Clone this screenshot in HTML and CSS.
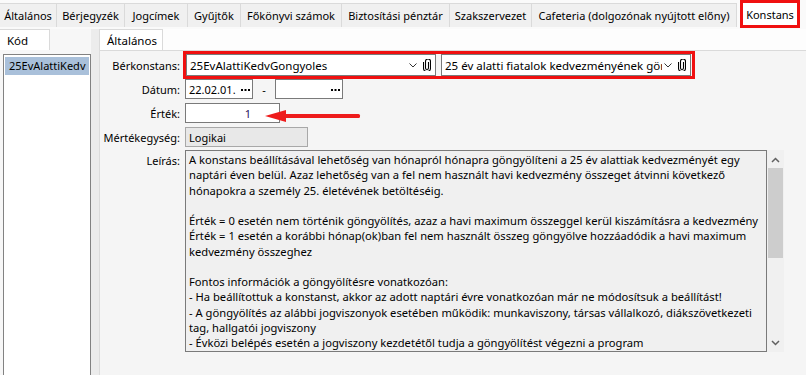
FILE: index.html
```html
<!DOCTYPE html>
<html lang="hu">
<head>
<meta charset="utf-8">
<title>Konstans</title>
<link rel="stylesheet" href="styles.css">
</head>
<body>
<div class="topbar">
  <div class="tab t1">Általános</div>
  <div class="tab t2">Bérjegyzék</div>
  <div class="tab t3">Jogcímek</div>
  <div class="tab t4">Gyűjtők</div>
  <div class="tab t5">Főkönyvi számok</div>
  <div class="tab t6">Biztosítási pénztár</div>
  <div class="tab t7">Szakszervezet</div>
  <div class="tab t8">Cafeteria (dolgozónak nyújtott előny)</div>
  <div class="tab active">Konstans</div>
</div>
<div class="main">
  <div class="left">
    <div class="subtabs"><div class="subtab kod">Kód</div></div>
    <div class="listwrap">
      <div class="list">
        <div class="item sel">25EvAlattiKedv</div>
      </div>
    </div>
  </div>
  <div class="splitter"></div>
  <div class="right">
    <div class="subtabs"><div class="subtab alt">Általános</div></div>
    <div class="page">
      <div class="row r-ber">
        <div class="lbl">Bérkonstans:</div>
        <div class="redbox">
          <div class="combo">
            <span class="ctext">25EvAlattiKedvGongyoles</span>
            <svg class="chev" width="8" height="5" viewBox="0 0 8 5"><path d="M0.5 0.5 L4 4 L7.5 0.5" fill="none" stroke="#333" stroke-width="1"/></svg>
            <svg class="clip" width="8" height="12" viewBox="0 0 8 12"><path d="M5.5 3 V9 A1.5 1.5 0 0 1 2.5 9 V2.5 A2.5 2.5 0 0 1 7.5 2.5 V9 A3.5 3.5 0 0 1 0.5 9 V3" fill="none" stroke="#000" stroke-width="1.1"/></svg>
          </div>
          <div class="combo">
            <span class="ctext">25 év alatti fiatalok kedvezményének göngyölítése</span>
            <svg class="chev" width="8" height="5" viewBox="0 0 8 5"><path d="M0.5 0.5 L4 4 L7.5 0.5" fill="none" stroke="#333" stroke-width="1"/></svg>
            <svg class="clip" width="8" height="12" viewBox="0 0 8 12"><path d="M5.5 3 V9 A1.5 1.5 0 0 1 2.5 9 V2.5 A2.5 2.5 0 0 1 7.5 2.5 V9 A3.5 3.5 0 0 1 0.5 9 V3" fill="none" stroke="#000" stroke-width="1.1"/></svg>
          </div>
        </div>
      </div>
      <div class="row r-dat">
        <div class="lbl">Dátum:</div>
        <div class="field date"><span>22.02.01.</span><svg class="dots" width="9" height="2" viewBox="0 0 9 2"><rect x="0" y="0" width="2" height="2" fill="#000"/><rect x="3.5" y="0" width="2" height="2" fill="#000"/><rect x="7" y="0" width="2" height="2" fill="#000"/></svg></div>
        <div class="dash">-</div>
        <div class="field date"><span></span><svg class="dots" width="9" height="2" viewBox="0 0 9 2"><rect x="0" y="0" width="2" height="2" fill="#000"/><rect x="3.5" y="0" width="2" height="2" fill="#000"/><rect x="7" y="0" width="2" height="2" fill="#000"/></svg></div>
      </div>
      <div class="row r-ert">
        <div class="lbl">Érték:</div>
        <div class="field ert">1</div>
        <svg class="arrow" width="100" height="16" viewBox="0 0 100 16"><polygon points="0,8 21,2 21,14" fill="#ee1c1c"/><rect x="19" y="6" width="76" height="4" rx="1.5" fill="#ee1c1c"/></svg>
      </div>
      <div class="row r-mert">
        <div class="lbl">Mértékegység:</div>
        <div class="field ro">Logikai</div>
      </div>
      <div class="row r-leir">
        <div class="lbl top">Leírás:</div>
        <div class="memo">
          <div class="memotext">A konstans beállításával lehetőség van hónapról hónapra göngyölíteni a 25 év alattiak kedvezményét egy<br>naptári éven belül. Azaz lehetőség van a fel nem használt havi kedvezmény összeget átvinni következő<br>hónapokra a személy 25. életévének betöltéséig.<br><br>Érték = 0 esetén nem történik göngyölítés, azaz a havi maximum összeggel kerül kiszámításra a kedvezmény<br>Érték = 1 esetén a korábbi hónap(ok)ban fel nem használt összeg göngyölve hozzáadódik a havi maximum<br>kedvezmény összeghez<br><br>Fontos információk a göngyölítésre vonatkozóan:<br>- Ha beállítottuk a konstanst, akkor az adott naptári évre vonatkozóan már ne módosítsuk a beállítást!<br>- A göngyölítés az alábbi jogviszonyok esetében működik: munkaviszony, társas vállalkozó, diákszövetkezeti<br>tag, hallgatói jogviszony<br>- Évközi belépés esetén a jogviszony kezdetétől tudja a göngyölítést végezni a program</div>
        </div>
        <div class="vscroll">
          <svg class="sarrow" width="9" height="6" viewBox="0 0 9 6"><path d="M1 5 L4.5 1.5 L8 5" fill="none" stroke="#606060" stroke-width="1.5"/></svg>
          <div class="thumb"></div>
          <div class="track"></div>
          <svg class="sarrow" width="9" height="6" viewBox="0 0 9 6"><path d="M1 1 L4.5 4.5 L8 1" fill="none" stroke="#606060" stroke-width="1.5"/></svg>
        </div>
      </div>
    </div>
  </div>
</div>
</body>
</html>
```

FILE: styles.css
```css
* { box-sizing: border-box; }
html, body { margin: 0; padding: 0; }
body {
  width: 806px;
  height: 375px;
  overflow: hidden;
  background: #f5f5f5;
  font-family: "Noto Sans", "Open Sans", sans-serif;
  font-size: 11px;
  color: #000;
}

/* top tabs */
.topbar {
  height: 29px;
  display: flex;
  align-items: flex-start;
  background: #fafafa;
}
.tab {
  margin-top: 3px;
  height: 24px;
  border-top: 1px solid #dadada;
  border-right: 1px solid #dadada;
  background: #f0f0f0;
  display: flex;
  align-items: center;
  justify-content: center;
  white-space: nowrap;
  flex: none;
}
.t1 { width: 57px; }
.t2 { width: 68px; }
.t3 { width: 63px; }
.t4 { width: 53px; }
.t5 { width: 101px; }
.t6 { width: 108px; }
.t7 { width: 82px; }
.t8 { width: 205px; }
.tab.active {
  margin-top: 0;
  margin-left: 3px;
  width: 60px;
  height: 28px;
  border: 3px solid #f01010;
  background: #fff;
}

/* main */
.main {
  display: flex;
  height: 346px;
}
.left {
  width: 91px;
  flex: none;
  display: flex;
  flex-direction: column;
  background: #f7f7f7;
}
.subtabs {
  height: 21px;
  display: flex;
  flex: none;
}
.subtab {
  height: 21px;
  background: #fff;
  border-top: 1px solid #dadada;
  border-right: 1px solid #dadada;
  border-left: 1px solid #dadada;
  display: flex;
  align-items: center;
  font-size: 11.5px;
}
.kod { width: 50px; padding-left: 7px; border-left: none; }
.alt { width: 64px; padding-left: 7px; margin-left: -1px; }
.listwrap {
  flex: 1;
  padding: 4px 0 0 3px;
  display: flex;
}
.list {
  flex: 1;
  background: #fff;
  border: 1px solid #828282;
  border-bottom: none;
  padding: 2px 1px 0 1px;
  overflow: hidden;
}
.item {
  height: 18px;
  line-height: 18px;
  padding-left: 4px;
  white-space: nowrap;
  overflow: hidden;
}
.item.sel { background: #a9c0da; }

.splitter {
  width: 9px;
  flex: none;
  background: #ececec;
  border-right: 1px solid #dcdcdc;
}

.right {
  flex: 1;
  display: flex;
  flex-direction: column;
  background: #fdfdfd;
}
.page {
  flex: 1;
  background: #f5f5f5;
  border-top: 1px solid #dadada;
  display: flex;
  flex-direction: column;
}
.row {
  display: flex;
  align-items: center;
  position: relative;
}
.lbl {
  width: 81px;
  flex: none;
  text-align: right;
  padding-right: 1px;
  margin-right: 4px;
  white-space: nowrap;
}
.lbl.top { align-self: flex-start; padding-top: 3px; }

.r-ber { height: 28px; }
.r-ber .lbl { margin-right: 2px; }
.redbox {
  height: 28px;
  border: 3px solid #f01010;
  padding: 0 1px 0 0;
  display: flex;
  gap: 5px;
  align-items: flex-start;
  background: #f5f5f5;
}
.combo {
  width: 250px;
  height: 22px;
  border: 1px solid #7a7a7a;
  background: #fff;
  display: flex;
  align-items: center;
  padding: 0 4px 0 3px;
}
.ctext {
  flex: 1;
  white-space: nowrap;
  overflow: hidden;
  font-size: 11.5px;
}
.chev { flex: none; margin: 1px 6px 0 2px; }
.clip { flex: none; }

.field {
  height: 20px;
  border: 1px solid #7a7a7a;
  background: #fff;
  display: flex;
  align-items: center;
  padding: 0 3px;
  white-space: nowrap;
}
.r-dat { height: 20px; }
.date { width: 68px; justify-content: space-between; padding-right: 2px; }
.dots { flex: none; margin-top: 2px; }
.dash { width: 22px; text-align: center; }

.r-ert { height: 20px; margin-top: 4px; }
.ert { width: 95px; justify-content: flex-end; padding-right: 28px; color: #2a1262; }
.arrow { position: absolute; left: 165px; top: 5px; }

.r-mert { height: 20px; margin-top: 4px; }
.ro { width: 123px; background: #e8e8e8; border-color: #a8a8a8; }

.r-leir { margin-top: 3px; align-items: flex-start; }
.memo {
  width: 582px;
  height: 202px;
  border: 1px solid #7a7a7a;
  background: #f0f0f0;
  padding: 1px 0 0 3px;
  overflow: hidden;
}
.memotext {
  font-size: 11.2px;
  line-height: 15.25px;
  white-space: nowrap;
}
.vscroll {
  width: 17px;
  height: 202px;
  background: #f0f0f0;
  display: flex;
  flex-direction: column;
  align-items: center;
  padding: 7px 0 6px;
}
.sarrow { flex: none; }
.thumb {
  margin-top: 5px;
  width: 15px;
  height: 90px;
  background: #cdcdcd;
  flex: none;
}
.track { flex: 1; }
```
